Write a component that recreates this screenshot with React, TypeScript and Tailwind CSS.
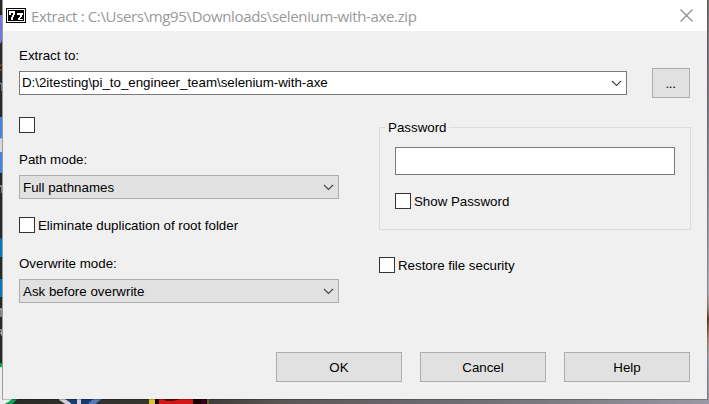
import React from "react";

function Desktop() {
  return (
    <svg className="absolute inset-0" width="709" height="404" viewBox="0 0 709 404" aria-hidden="true">
      <defs>
        <linearGradient id="floor" x1="0" x2="1" y1="0" y2="0">
          <stop offset="0" stopColor="#292925" />
          <stop offset="0.28" stopColor="#3b3a35" />
          <stop offset="0.4" stopColor="#5a5757" />
          <stop offset="0.7" stopColor="#737277" />
          <stop offset="1" stopColor="#9897a3" />
        </linearGradient>
        <linearGradient id="edge" x1="0" x2="0" y1="0" y2="1">
          <stop offset="0" stopColor="#77706f" />
          <stop offset="0.3" stopColor="#83818f" />
          <stop offset="0.72" stopColor="#b0aebb" />
          <stop offset="0.76" stopColor="#a39083" />
          <stop offset="0.79" stopColor="#5f4028" />
          <stop offset="0.84" stopColor="#b58f78" />
          <stop offset="0.88" stopColor="#a7a5b2" />
          <stop offset="1" stopColor="#9897a3" />
        </linearGradient>
      </defs>
      <rect width="709" height="404" fill="url(#floor)" />
      <rect width="4" height="399" fill="#2b2926" />
      <path d="M0 15h3v25l-3 4z" fill="#7376d6" />
      <path d="M0 66q1-2 3-1M0 70h2" stroke="#b8622c" fill="none" />
      <path d="M0 83q2 0 2 3v5" stroke="#8bb4dd" fill="none" />
      <path d="M0 117h3v56H0z" fill="#4285e6" />
      <path d="M0 139l3-2v15H0z" fill="#d7d9df" />
      <path d="M0 186h2v7" stroke="#c8dce6" fill="none" />
      <path d="M0 239l3-2v20H0zM0 279h3v18H0z" fill="#0878bd" />
      <path d="M0 309h2M1 309v8M0 330h2v6M0 333h2" stroke="#e3dedb" fill="none" />
      <circle cx="-2" cy="386" r="21" fill="#eeeeee" stroke="#05a953" strokeWidth="4" />
      <path d="M60 399h41l-6 5H67z" fill="#193c70" />
      <path d="M60 398l10 7M79 399v5" stroke="#d5ccda" strokeWidth="4" />
      <path d="M100 397l-10 8" stroke="#5679b7" strokeWidth="5" />
      <path d="M149 399h59v5h-59z" fill="#170000" />
      <path d="M149 399h6v5h-6z" fill="#dcc22d" />
      <path d="M159 399h34v5h-34z" fill="#d41716" />
      <path d="M163 399h17l-7 2h-7z" fill="#4d1010" />
      <path d="M201 399h5v5h-5z" fill="#39001d" />
      <path d="M207 399h2v5h-2z" fill="#6c6727" />
      <rect x="707" width="2" height="404" fill="url(#edge)" />
    </svg>
  );
}

function Chevron() {
  return (
    <svg width="11" height="7" viewBox="0 0 11 7" fill="none" aria-hidden="true">
      <path d="M1 1l4.5 4.5L10 1" stroke="#444" strokeWidth="1.1" />
    </svg>
  );
}

function Check({ label }: { label?: string }) {
  return (
    <label className="flex h-4">
      <input type="checkbox" className="size-4 shrink-0 appearance-none border border-[#333] bg-white" />
      {label && <span className="mt-px ml-[3px] tracking-[-0.02px] whitespace-nowrap">{label}</span>}
    </label>
  );
}

function Select({ value }: { value: string }) {
  return (
    <button className="flex h-6 w-80 items-center justify-between border border-[#adadad] bg-[#e1e1e1] pr-1 pl-[3px] text-left">
      <span className="pt-[2px]">{value}</span>
      <Chevron />
    </button>
  );
}

function PushButton({ children }: { children: React.ReactNode }) {
  return <button className="h-[30px] w-[126px] border border-[#adadad] bg-[#e1e1e1] pt-[2px]">{children}</button>;
}

export default function App() {
  return (
    <div className="relative h-[404px] w-[709px] overflow-hidden">
      <Desktop />
      <main className="relative ml-[2px] h-[400px] w-[706px] border border-t-0 border-r-black/20 border-b-black/20 border-l-[#999] bg-[#f0f0f0] bg-clip-padding font-['Liberation_Sans',Arial,sans-serif] text-[13.33px] leading-4 text-black">
        <header className="flex h-[31px] items-center justify-between bg-white pr-[14px] pl-[3px]">
          <div className="flex items-center gap-[5px]">
            <svg width="20" height="15" viewBox="0 0 20 15" shapeRendering="crispEdges" aria-hidden="true">
              <path d="M0 0h20v15H0z" />
              <path d="M1 1h18v13H1z" fill="#fff" />
              <path d="M2 2h16v11H2z" />
              <path d="M3 3h6v4H8v2H7v3H5V9h1V7h1V5H5v2H3zM11 5h6v2h-1v2h-1v1h-1v1h3v1h-5v-2h1V9h1V7h-3z" fill="#fff" />
            </svg>
            <h1 className="font-['Open_Sans',sans-serif] text-[15px] leading-5 font-normal tracking-[-0.35px] whitespace-nowrap text-[#999]">Extract : C:\Users\mg95\Downloads\selenium-with-axe.zip</h1>
          </div>
          <button aria-label="Close" className="size-[13px]">
            <svg width="13" height="13" viewBox="0 0 13 13" aria-hidden="true">
              <path d="M.5.5l12 12m0-12l-12 12" stroke="#888" strokeWidth="1.1" />
            </svg>
          </button>
        </header>

        <section className="pt-[17px] pr-[17px] pl-4">
          <div className="h-5">Extract to:</div>
          <div className="flex h-[30px] items-center justify-between">
            <div className="flex h-6 w-[608px] items-center justify-between border border-[#7a7a7a] bg-white pr-1 pl-[2px]">
              <span className="tracking-[-0.02px]">D:\2itesting\pi_to_engineer_team\selenium-with-axe</span>
              <Chevron />
            </div>
            <button className="h-[30px] w-[38px] border border-[#adadad] bg-[#e1e1e1] pt-[2px] pr-px tracking-[-0.4px]">...</button>
          </div>
        </section>

        <div className="flex h-[254px] gap-10 pt-[19px] pl-4">
          <section className="w-80">
            <Check />
            <div className="mt-[19px] mb-[7px]">Path mode:</div>
            <Select value="Full pathnames" />
            <div className="mt-[18px]">
              <Check label="Eliminate duplication of root folder" />
            </div>
            <div className="mt-[23px] mb-[7px]">Overwrite mode:</div>
            <Select value="Ask before overwrite" />
          </section>
          <section className="w-[312px] pt-[2px]">
            <fieldset className="h-[111px] border border-[#dcdcdc] px-[15px]">
              <legend className="-ml-[9px] h-4 px-[2px] pt-px">Password</legend>
              <input type="password" aria-label="Password" className="mt-[12px] block h-7 w-[280px] border border-[#7a7a7a] bg-white" />
              <div className="mt-[18px]">
                <Check label="Show Password" />
              </div>
            </fieldset>
            <div className="mt-[27px]">
              <Check label="Restore file security" />
            </div>
          </section>
        </div>

        <footer className="flex justify-end gap-[18px] pr-[17px]">
          <PushButton>OK</PushButton>
          <PushButton>Cancel</PushButton>
          <PushButton>Help</PushButton>
        </footer>
      </main>
    </div>
  );
}
